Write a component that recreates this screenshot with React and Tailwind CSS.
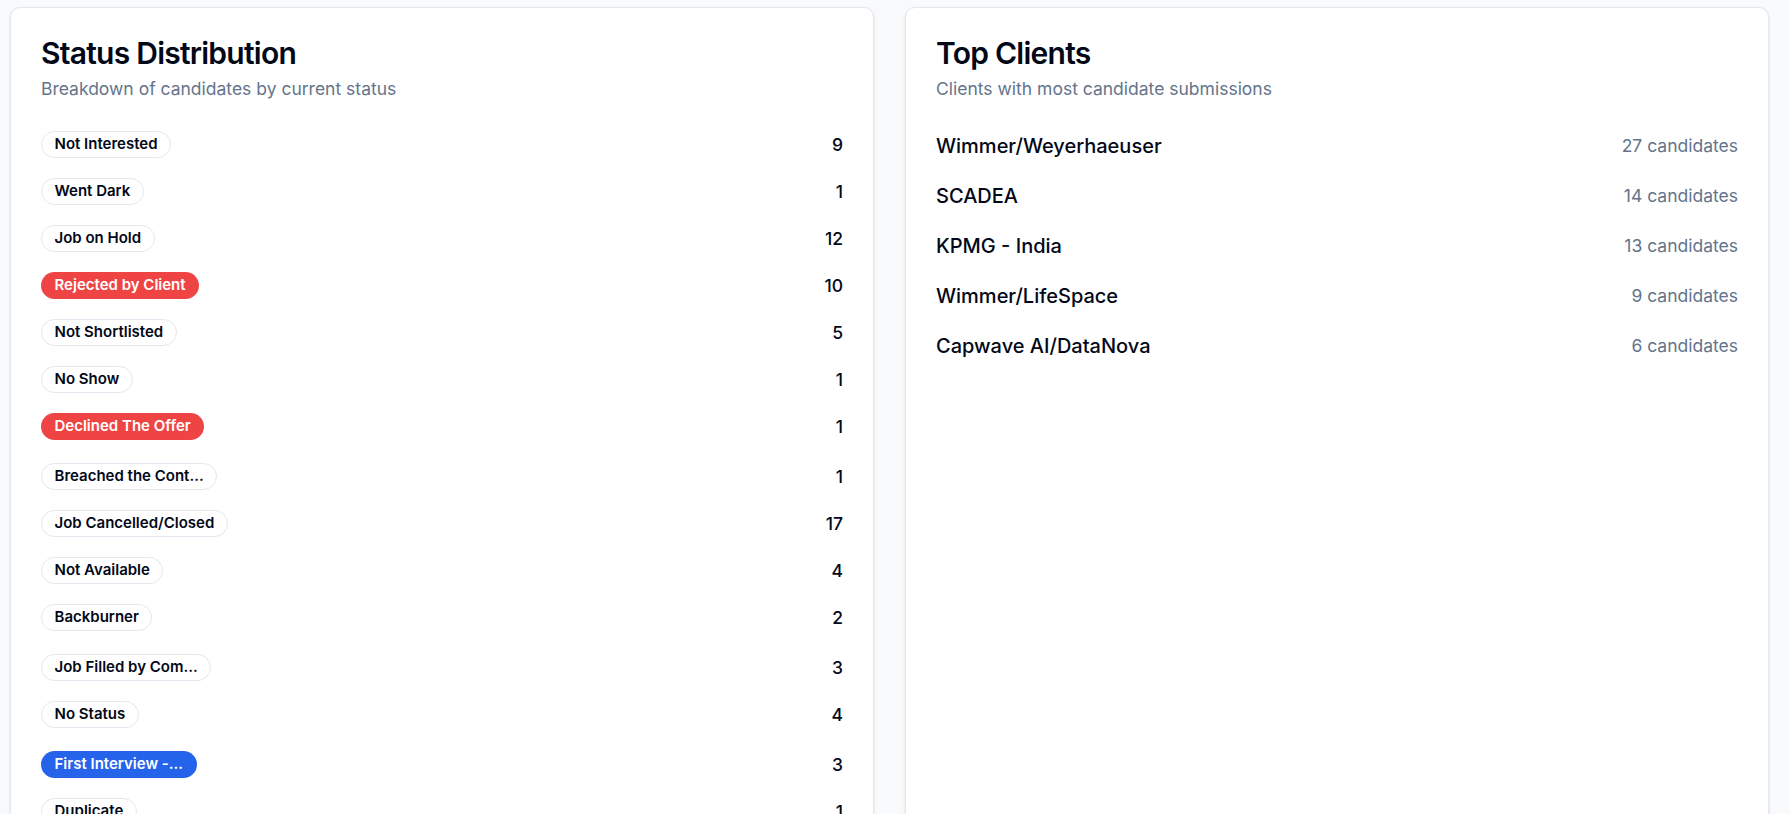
import React from "react";

const statuses = [
  { label: "Not Interested", count: 9, variant: "outline" },
  { label: "Went Dark", count: 1, variant: "outline" },
  { label: "Job on Hold", count: 12, variant: "outline" },
  { label: "Rejected by Client", count: 10, variant: "red" },
  { label: "Not Shortlisted", count: 5, variant: "outline" },
  { label: "No Show", count: 1, variant: "outline" },
  { label: "Declined The Offer", count: 1, variant: "red" },
  { label: "Breached the Cont...", count: 1, variant: "outline", truncated: true },
  { label: "Job Cancelled/Closed", count: 17, variant: "outline" },
  { label: "Not Available", count: 4, variant: "outline" },
  { label: "Backburner", count: 2, variant: "outline" },
  { label: "Job Filled by Com...", count: 3, variant: "outline", truncated: true },
  { label: "No Status", count: 4, variant: "outline" },
  { label: "First Interview -...", count: 3, variant: "blue", truncated: true },
  { label: "Duplicate", count: 1, variant: "outline" },
];

const clients = [
  { name: "Wimmer/Weyerhaeuser", count: 27 },
  { name: "SCADEA", count: 14 },
  { name: "KPMG - India", count: 13 },
  { name: "Wimmer/LifeSpace", count: 9 },
  { name: "Capwave AI/DataNova", count: 6 },
];

function Badge({ variant, children }) {
  const base =
    "inline-flex items-center rounded-full border px-[12.5px] py-[2.5px] text-[15px] leading-[20px] font-semibold whitespace-nowrap";
  if (variant === "red")
    return <span className={`${base} border-transparent bg-[#ef4444] text-white`}>{children}</span>;
  if (variant === "blue")
    return <span className={`${base} border-transparent bg-[#2563eb] text-white`}>{children}</span>;
  return <span className={`${base} border-[#e2e8f0] bg-white text-[#020817]`}>{children}</span>;
}

function CardHeader({ title, subtitle }) {
  return (
    <div className="flex flex-col gap-[7.5px] p-[30px]">
      <h3 className="text-[30px] leading-[30px] font-semibold tracking-[-0.025em] text-[#020817]">{title}</h3>
      <p className="text-[17.5px] leading-[25px] text-[#64748b]">{subtitle}</p>
    </div>
  );
}

export default function App() {
  return (
    <div
      className="min-h-screen bg-[#f8fafc] pt-[7px] pl-[10px] pr-[21px] pb-[30px]"
      style={{ fontFamily: "Inter, 'Noto Sans', sans-serif" }}
    >
      <div className="grid grid-cols-2 gap-[31px] items-stretch">
        <div className="rounded-[10px] border border-[#e2e8f0] bg-white shadow-sm">
          <CardHeader title="Status Distribution" subtitle="Breakdown of candidates by current status" />
          <div className="px-[30px] pb-[30px] flex flex-col gap-[20px]">
            {statuses.map((s) => (
              <div
                key={s.label}
                className={`flex items-center justify-between ${s.truncated ? "pt-[3px]" : ""}`}
              >
                <Badge variant={s.variant}>{s.label}</Badge>
                <span className="text-[17.5px] leading-[25px] font-medium text-[#020817]">{s.count}</span>
              </div>
            ))}
          </div>
        </div>
        <div className="rounded-[10px] border border-[#e2e8f0] bg-white shadow-sm">
          <CardHeader title="Top Clients" subtitle="Clients with most candidate submissions" />
          <div className="px-[30px] pb-[30px] flex flex-col gap-[20px]">
            {clients.map((c) => (
              <div key={c.name} className="flex items-center justify-between">
                <span className="text-[20px] leading-[30px] font-medium text-[#020817]">{c.name}</span>
                <span className="text-[17.5px] leading-[25px] text-[#64748b]">{c.count} candidates</span>
              </div>
            ))}
          </div>
        </div>
      </div>
    </div>
  );
}
